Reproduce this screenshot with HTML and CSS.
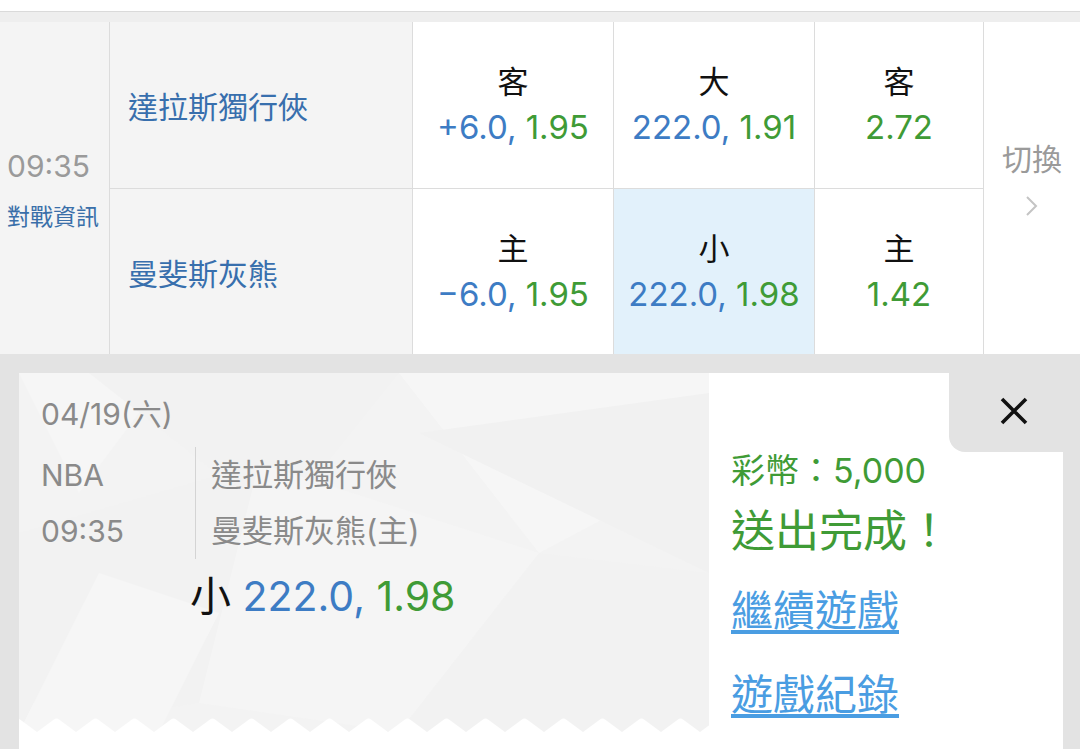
FILE: index.html
```html
<!DOCTYPE html>
<html lang="zh-Hant">
<head>
  <meta charset="UTF-8">
  <meta name="viewport" content="width=device-width, initial-scale=1.0">
  <title>投注完成</title>
  <link rel="stylesheet" href="styles.css">
</head>
<body>
  <div class="topbar"></div>
  <div class="band"></div>

  <!-- Game row -->
  <div class="game">
    <div class="time-cell">
      <div class="kickoff">09:35</div>
      <a class="info-link">對戰資訊</a>
    </div>
    <div class="team">達拉斯獨行俠</div>
    <div class="odd">
      <span class="side">客</span>
      <span class="line"><span class="num">+6.0,</span> <span class="rate">1.95</span></span>
    </div>
    <div class="odd">
      <span class="side">大</span>
      <span class="line"><span class="num">222.0,</span> <span class="rate">1.91</span></span>
    </div>
    <div class="odd">
      <span class="side">客</span>
      <span class="line"><span class="rate">2.72</span></span>
    </div>
    <div class="switch">
      <span>切換</span>
      <svg width="14" height="22" viewBox="0 0 14 22"><path d="M2 2 L11 11 L2 20" fill="none" stroke="#c4c4c4" stroke-width="2"/></svg>
    </div>
    <div class="team">曼斐斯灰熊</div>
    <div class="odd">
      <span class="side">主</span>
      <span class="line"><span class="num">&minus;6.0,</span> <span class="rate">1.95</span></span>
    </div>
    <div class="odd picked">
      <span class="side">小</span>
      <span class="line"><span class="num">222.0,</span> <span class="rate">1.98</span></span>
    </div>
    <div class="odd">
      <span class="side">主</span>
      <span class="line"><span class="rate">1.42</span></span>
    </div>
  </div>

  <!-- Bet receipt -->
  <div class="overlay">
    <div class="receipt">
      <div class="ticket">
        <svg class="ticket-bg" width="690" height="359" viewBox="0 0 690 359">
          <polygon points="0,0 150,0 60,120" fill="#f6f6f6"/>
          <polygon points="70,0 380,0 260,150" fill="#f2f2f2"/>
          <polygon points="380,0 690,0 690,90 520,180" fill="#f6f6f6"/>
          <polygon points="400,60 690,20 690,200" fill="#f1f1f1"/>
          <polygon points="0,160 240,90 180,330 0,359" fill="#f2f2f2"/>
          <polygon points="240,90 520,180 380,359 180,330" fill="#f5f5f5"/>
          <polygon points="80,200 200,240 140,359 0,359" fill="#f6f6f6"/>
          <polygon points="520,180 690,200 690,359 380,359" fill="#f2f2f2"/>
        </svg>
        <div class="ticket-date">04/19(六)</div>
        <div class="ticket-match">
          <div class="ticket-meta">
            <div>NBA</div>
            <div>09:35</div>
          </div>
          <div class="ticket-teams">
            <div>達拉斯獨行俠</div>
            <div>曼斐斯灰熊(主)</div>
          </div>
        </div>
        <div class="ticket-pick">小 <span class="num">222.0,</span> <span class="rate">1.98</span></div>
        <svg class="zigzag" width="690" height="14">
          <defs>
            <pattern id="teeth" x="18" y="0" width="39" height="14" patternUnits="userSpaceOnUse">
              <path d="M0 14 L17 1.5 Q19.5 -0.5 22 1.5 L39 14 Z" fill="#fff"/>
            </pattern>
          </defs>
          <rect width="690" height="14" fill="url(#teeth)"/>
        </svg>
      </div>

      <div class="result">
        <button class="close" aria-label="關閉">
          <svg width="28" height="28" viewBox="0 0 28 28"><path d="M2 2 L26 26 M26 2 L2 26" stroke="#111" stroke-width="3.6"/></svg>
        </button>
        <div class="coins">彩幣：5,000</div>
        <div class="done">送出完成！</div>
        <a class="result-link">繼續遊戲</a>
        <a class="result-link">遊戲紀錄</a>
      </div>
    </div>
  </div>
</body>
</html>
```

FILE: styles.css
```css
* {
  box-sizing: border-box;
  margin: 0;
  padding: 0;
}

body {
  font-family: Inter, "Noto Sans CJK TC", sans-serif;
  background-color: #fff;
  color: #111;
  width: 1080px;
  height: 749px;
  overflow: hidden;
}

.topbar {
  height: 12px;
  background-color: #fff;
  border-bottom: 1px solid #dadada;
}

.band {
  height: 10px;
  background-color: #eeeeee;
}

/* Game table */
.game {
  display: grid;
  grid-template-columns: 109px 302px 200px 200px 168px 1fr;
  grid-template-rows: 166px 165px;
  gap: 1px;
  background-color: #dcdcdc;
}

.time-cell {
  grid-row: 1 / 3;
  background-color: #f4f4f4;
  display: flex;
  flex-direction: column;
  justify-content: center;
  padding: 4px 0 0 7px;
}

.kickoff {
  font-size: 30px;
  line-height: 36px;
  color: #9a9a9a;
}

.info-link {
  margin-top: 18px;
  font-size: 23px;
  line-height: 30px;
  color: #3a6fa9;
}

.team {
  background-color: #f4f4f4;
  display: flex;
  align-items: center;
  padding: 0 0 0 18px;
  font-size: 30px;
  color: #386fad;
}

.odd {
  background-color: #fff;
  display: flex;
  flex-direction: column;
  align-items: center;
  justify-content: center;
}

.odd.picked {
  background-color: #e2f1fb;
}

.side {
  font-size: 31px;
  line-height: 44px;
  color: #111;
}

.line {
  font-size: 33px;
  line-height: 46px;
  color: #3f9b36;
}

.num {
  color: #3d7cc4;
}

.rate {
  color: #3f9b36;
}

.switch {
  grid-column: 6;
  grid-row: 1 / 3;
  background-color: #fff;
  display: flex;
  flex-direction: column;
  align-items: center;
  justify-content: center;
  gap: 16px;
  padding-bottom: 24px;
  font-size: 30px;
  color: #9a9a9a;
}

/* Receipt overlay */
.overlay {
  height: 395px;
  background-color: #e3e3e3;
  padding: 19px 17px 0 19px;
}

.receipt {
  display: flex;
  height: 376px;
  background-color: #fff;
}

.ticket {
  position: relative;
  width: 690px;
  height: 359px;
  background-color: #f3f3f3;
  padding: 23px 0 0 22px;
  color: #8a8a8a;
}

.ticket-bg {
  position: absolute;
  top: 0;
  left: 0;
}

.zigzag {
  position: absolute;
  left: 0;
  bottom: 0;
}

.ticket-date,
.ticket-match,
.ticket-pick {
  position: relative;
}

.ticket-date {
  font-size: 30px;
  line-height: 36px;
}

.ticket-match {
  display: flex;
  margin-top: 15px;
}

.ticket-meta {
  width: 154px;
  font-size: 30px;
  line-height: 56px;
}

.ticket-teams {
  border-left: 1px solid #d4d4d4;
  padding-left: 15px;
  font-size: 31px;
  line-height: 56px;
}

.ticket-pick {
  margin: 13px 0 0 149px;
  font-size: 41px;
  line-height: 48px;
  color: #111;
}

.result {
  position: relative;
  flex: 1;
  background-color: #fff;
  padding: 78px 0 0 22px;
  display: flex;
  flex-direction: column;
  align-items: flex-start;
}

.close {
  position: absolute;
  top: 0;
  right: 0;
  width: 114px;
  height: 79px;
  border: none;
  border-bottom-left-radius: 16px;
  background-color: #e3e3e3;
  display: flex;
  align-items: center;
  justify-content: center;
  padding-left: 16px;
  padding-bottom: 4px;
}

.coins {
  font-size: 34px;
  line-height: 40px;
  color: #3f9b36;
}

.done {
  margin-top: 12px;
  font-size: 44px;
  line-height: 56px;
  color: #3f9b36;
}

.result-link {
  font-size: 42px;
  line-height: 50px;
  color: #4a9de2;
  text-decoration: underline;
  text-underline-offset: 4px;
  margin-top: 27px;
}

.result-link + .result-link {
  margin-top: 34px;
}
```
